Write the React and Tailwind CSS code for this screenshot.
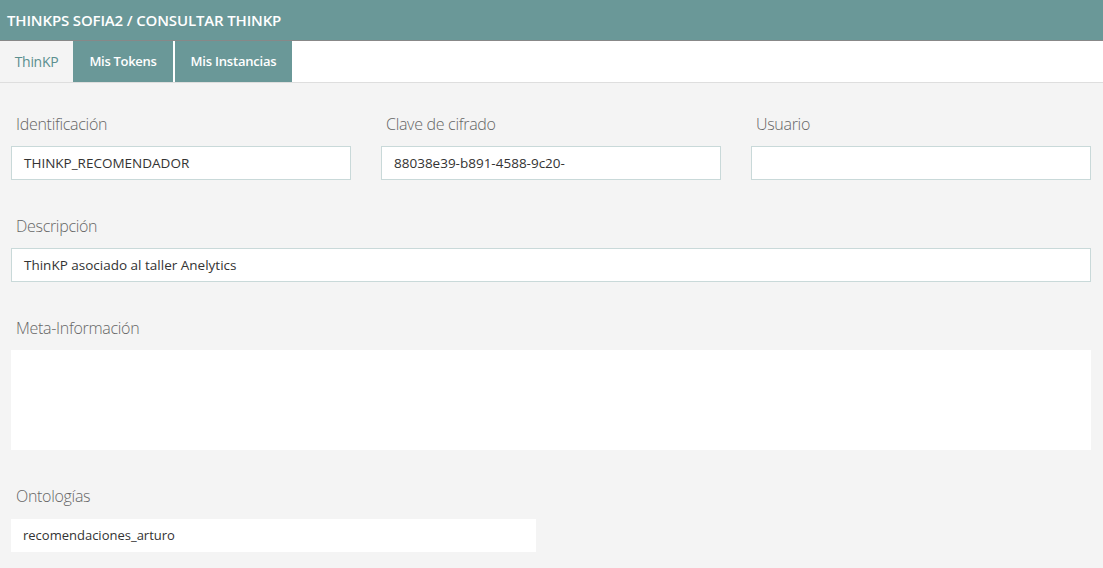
export default function App() {
  const font = { fontFamily: '"Open Sans", "Noto Sans", sans-serif' };
  const Label = ({ children }) => (
    <div className="h-[22px] pl-[5px] text-[16px] leading-[22px] font-light text-[#666]" style={{ letterSpacing: '-0.3px' }}>{children}</div>
  );
  const Input = ({ children, cls = '' }) => (
    <div className={`h-[34px] bg-white border border-[#c9d9d9] px-[12px] flex items-center text-[13.5px] text-[#333] ${cls}`}>{children}</div>
  );
  return (
    <div className="w-[1103px] h-[568px] bg-[#f4f4f4] overflow-hidden" style={font}>
      <div className="h-[41px] bg-[#6a9898] border-b border-[#888] flex items-center px-[7px]">
        <span className="text-white text-[15px] font-semibold tracking-[-0.15px]">THINKPS SOFIA2 / CONSULTAR THINKP</span>
      </div>
      <div className="h-[42px] bg-white border-b border-[#dedede] flex">
        <div className="w-[73px] bg-[#f4f4f4] flex items-center justify-center text-[14px] text-[#5b8f8f] tracking-[-0.3px]">ThinKP</div>
        <div className="w-[100px] bg-[#6a9898] flex items-center justify-center text-[13px] font-semibold text-white tracking-[-0.3px]">Mis Tokens</div>
        <div className="w-[2px] bg-white"></div>
        <div className="w-[117px] bg-[#6a9898] flex items-center justify-center text-[13px] font-semibold text-white tracking-[-0.2px]">Mis Instancias</div>
      </div>
      <div className="pl-[11px] pr-[12px] pt-[30px]">
        <div className="grid grid-cols-3 gap-x-[30px]">
          <div>
            <Label>Identificación</Label>
            <div className="h-[11px]" />
            <Input>THINKP_RECOMENDADOR</Input>
          </div>
          <div>
            <Label>Clave de cifrado</Label>
            <div className="h-[11px]" />
            <Input>88038e39-b891-4588-9c20-</Input>
          </div>
          <div>
            <Label>Usuario</Label>
            <div className="h-[11px]" />
            <Input></Input>
          </div>
        </div>
        <div className="mt-[35px]">
          <Label>Descripción</Label>
          <div className="h-[11px]" />
          <Input>ThinKP asociado al taller Anelytics</Input>
        </div>
        <div className="mt-[35px]">
          <Label>Meta-Información</Label>
          <div className="h-[11px]" />
          <div className="h-[100px] bg-white"></div>
        </div>
        <div className="mt-[35px]">
          <Label>Ontologías</Label>
          <div className="h-[12px]" />
          <div className="w-[525px] h-[33px] bg-white px-[12px] flex items-center text-[13px] text-[#333]">recomendaciones_arturo</div>
        </div>
      </div>
    </div>
  );
}
